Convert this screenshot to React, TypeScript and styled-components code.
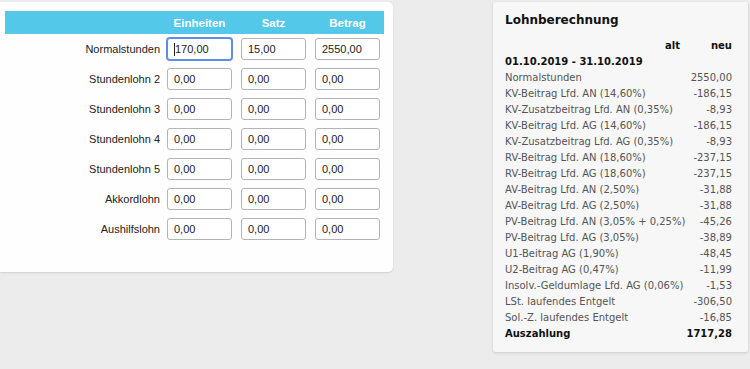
import { Fragment } from "react";
import styled, { createGlobalStyle } from "styled-components";

const GlobalStyle = createGlobalStyle`
    html, body {
        margin: 0;
        padding: 0;
        background-color: #ebeceb;
    }
`;

const Page = styled.div`
    display: flex;
    align-items: flex-start;
    gap: 100px;
    padding-top: 2px;
    width: 750px;
    height: 369px;
    box-sizing: border-box;
    overflow: hidden;
`;

const InputCard = styled.div`
    width: 393px;
    height: 270px;
    box-sizing: border-box;
    padding: 9px 9px 0 5px;
    background-color: #fdfefd;
    border-radius: 0 5px 5px 0;
    box-shadow: 0 1px 2px rgba(0, 0, 0, 0.12);
    font-family: "Liberation Sans", Arial, sans-serif;
`;

const columns = "153px 65px 65px 65px";

const Grid = styled.div`
    display: grid;
    grid-template-columns: ${columns};
    column-gap: 9px;
    row-gap: 8px;
    align-items: center;
`;

const HeaderBar = styled.div`
    grid-column: 1 / -1;
    display: grid;
    grid-template-columns: ${columns};
    column-gap: 9px;
    height: 23px;
    align-items: center;
    background-color: #54c8e8;
    margin-bottom: -4px;
    width: 379px;
    box-sizing: border-box;
`;

const HeaderCell = styled.div`
    color: #fff;
    font-weight: 700;
    font-size: 11.5px;
    text-align: center;
`;

const Label = styled.div`
    text-align: right;
    font-size: 11px;
    color: #222;
    margin-right: -2px;
`;

const Field = styled.div<{ $focused?: boolean }>`
    height: 22px;
    box-sizing: border-box;
    border: 1px solid ${(p) => (p.$focused ? "#5b8ee6" : "#b4b4b4")};
    box-shadow: ${(p) => (p.$focused ? "0 0 0 1px #5b8ee6" : "none")};
    border-radius: 3px;
    background: #fff;
    display: flex;
    align-items: center;
    padding-left: 6px;
    font-size: 11px;
    color: #222;
`;

const Caret = styled.span`
    display: inline-block;
    width: 1px;
    height: 13px;
    background: #222;
`;

const SummaryCard = styled.div`
    width: 255px;
    height: 350px;
    box-sizing: border-box;
    padding: 9px 16px 0 12px;
    background-color: #f6f7f6;
    border-radius: 2px;
    box-shadow: 0 1px 3px rgba(0, 0, 0, 0.15);
    font-family: "DejaVu Sans", Verdana, sans-serif;
`;

const Title = styled.div`
    font-size: 12px;
    font-weight: 700;
    color: #111;
    height: 18px;
    line-height: 18px;
    margin-bottom: 9px;
`;

const Line = styled.div<{ $bold?: boolean }>`
    display: grid;
    grid-template-columns: minmax(0, 1fr) 40px 52px;
    height: 16px;
    line-height: 16px;
    font-size: 10px;
    font-weight: ${(p) => (p.$bold ? 700 : 400)};
    color: ${(p) => (p.$bold ? "#111" : "#555")};
    white-space: nowrap;
`;

const Num = styled.span`
    text-align: right;
`;

const rows = [
    "Normalstunden",
    "Stundenlohn 2",
    "Stundenlohn 3",
    "Stundenlohn 4",
    "Stundenlohn 5",
    "Akkordlohn",
    "Aushilfslohn",
];

const lines: [string, string][] = [
    ["Normalstunden", "2550,00"],
    ["KV-Beitrag Lfd. AN (14,60%)", "-186,15"],
    ["KV-Zusatzbeitrag Lfd. AN (0,35%)", "-8,93"],
    ["KV-Beitrag Lfd. AG (14,60%)", "-186,15"],
    ["KV-Zusatzbeitrag Lfd. AG (0,35%)", "-8,93"],
    ["RV-Beitrag Lfd. AN (18,60%)", "-237,15"],
    ["RV-Beitrag Lfd. AG (18,60%)", "-237,15"],
    ["AV-Beitrag Lfd. AN (2,50%)", "-31,88"],
    ["AV-Beitrag Lfd. AG (2,50%)", "-31,88"],
    ["PV-Beitrag Lfd. AN (3,05% + 0,25%)", "-45,26"],
    ["PV-Beitrag Lfd. AG (3,05%)", "-38,89"],
    ["U1-Beitrag AG (1,90%)", "-48,45"],
    ["U2-Beitrag AG (0,47%)", "-11,99"],
    ["Insolv.-Geldumlage Lfd. AG (0,06%)", "-1,53"],
    ["LSt. laufendes Entgelt", "-306,50"],
    ["Sol.-Z. laufendes Entgelt", "-16,85"],
];

export default function App() {
    return (
        <>
            <GlobalStyle />
            <Page>
                <InputCard>
                    <Grid>
                        <HeaderBar>
                            <span />
                            <HeaderCell>Einheiten</HeaderCell>
                            <HeaderCell>Satz</HeaderCell>
                            <HeaderCell>Betrag</HeaderCell>
                        </HeaderBar>
                        {rows.map((r, i) => (
                            <Fragment key={r}>
                                <Label>{r}</Label>
                                {i === 0 ? (
                                    <>
                                        <Field $focused>
                                            <Caret />
                                            170,00
                                        </Field>
                                        <Field>15,00</Field>
                                        <Field>2550,00</Field>
                                    </>
                                ) : (
                                    <>
                                        <Field>0,00</Field>
                                        <Field>0,00</Field>
                                        <Field>0,00</Field>
                                    </>
                                )}
                            </Fragment>
                        ))}
                    </Grid>
                </InputCard>
                <SummaryCard>
                    <Title>Lohnberechnung</Title>
                    <Line $bold>
                        <span />
                        <Num>alt</Num>
                        <Num>neu</Num>
                    </Line>
                    <Line $bold>
                        <span>01.10.2019 - 31.10.2019</span>
                        <span />
                        <span />
                    </Line>
                    {lines.map(([l, v]) => (
                        <Line key={l}>
                            <span>{l}</span>
                            <span />
                            <Num>{v}</Num>
                        </Line>
                    ))}
                    <Line $bold>
                        <span>Auszahlung</span>
                        <span />
                        <Num>1717,28</Num>
                    </Line>
                </SummaryCard>
            </Page>
        </>
    );
}
